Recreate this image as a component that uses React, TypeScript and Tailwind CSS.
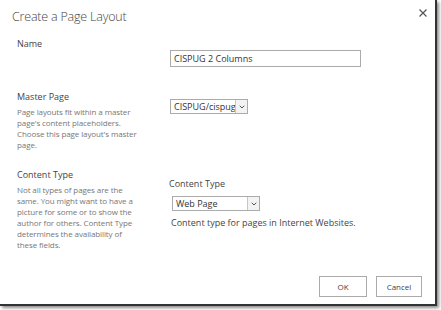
import { ChevronDown } from "lucide-react"

const font = { fontFamily: '"Open Sans", "Noto Sans", sans-serif' }

function Select({ value, width }: { value: string; width: string }) {
	return (
		<div className={`flex h-[15px] ${width} border border-[#ababab] bg-white`}>
			<div className="flex-1 pl-[3px] text-[9px] leading-[13px] text-[#333] overflow-hidden whitespace-nowrap">{value}</div>
			<div className="w-[12px] h-full border-l border-[#c6c6c6] bg-[#f3f3f3] flex items-center justify-center">
				<ChevronDown size={8} strokeWidth={3} color="#555" />
			</div>
		</div>
	)
}

export default function App() {
	return (
		<div className="w-[441px] h-[310px] bg-white" style={font}>
			<div className="w-[437px] h-[306px] bg-white border-r-2 border-b-2 border-[#333] shadow-[2px_2px_3px_rgba(0,0,0,0.45)] flex flex-col">
				{/* header */}
				<div className="flex justify-between items-start pl-3 pr-[8px] pt-[7px]">
					<div className="text-[12.5px] font-light leading-[20px] text-[#444] tracking-[-0.2px]">Create a Page Layout</div>
					<button className="mt-[2px]">
						<svg width="8" height="8" viewBox="0 0 8 8">
							<path d="M0.5 0.5L7.5 7.5M7.5 0.5L0.5 7.5" stroke="#555" strokeWidth="1.2" />
						</svg>
					</button>
				</div>

				{/* name */}
				<div className="grid grid-cols-[153px_1fr] pl-[17px] mt-[11px]">
					<div className="text-[9px] leading-[11px] text-[#444]">Name</div>
					<div className="pt-[12px]">
						<div className="w-[191px] h-[17px] border border-[#ababab] pl-[3px] text-[9px] leading-[15px] text-[#333]">CISPUG 2 Columns</div>
					</div>
				</div>

				{/* master page */}
				<div className="grid grid-cols-[153px_1fr] pl-[17px] mt-[24px]">
					<div>
						<div className="text-[9px] leading-[11px] text-[#444]">Master Page</div>
						<div className="mt-[4px] w-[123px] text-[8px] leading-[11px] text-[#777] tracking-[-0.1px]">
							Page layouts fit within a master page's content placeholders. Choose this page layout's master page.
						</div>
					</div>
					<div className="pt-[8px]">
						<Select value="CISPUG/cispug" width="w-[78px]" />
					</div>
				</div>

				{/* content type */}
				<div className="grid grid-cols-[153px_1fr] pl-[17px] mt-[19px]">
					<div>
						<div className="text-[9px] leading-[11px] text-[#444]">Content Type</div>
						<div className="mt-[4px] w-[123px] text-[8px] leading-[11px] text-[#777] tracking-[-0.1px]">
							Not all types of pages are the same. You might want to have a picture for some or to show the author for others. Content Type determines the availability of these fields.
						</div>
					</div>
					<div className="pt-[9px] -ml-[1px]">
						<div className="text-[9px] leading-[11px] text-[#444]">Content Type</div>
						<div className="mt-[7px] ml-[3px]">
							<Select value="Web Page" width="w-[88px]" />
						</div>
						<div className="mt-[6px] ml-[2px] text-[9px] leading-[11px] text-[#444]">Content type for pages in Internet Websites.</div>
					</div>
				</div>

				{/* footer */}
				<div className="mt-auto flex justify-end gap-[9px] pr-[13px] pb-[7px]">
					<button className="w-[48px] h-[21px] border border-[#ababab] bg-white text-[8px] text-[#444]">OK</button>
					<button className="w-[46px] h-[21px] border border-[#ababab] bg-white text-[8px] text-[#444]">Cancel</button>
				</div>
			</div>
		</div>
	)
}
